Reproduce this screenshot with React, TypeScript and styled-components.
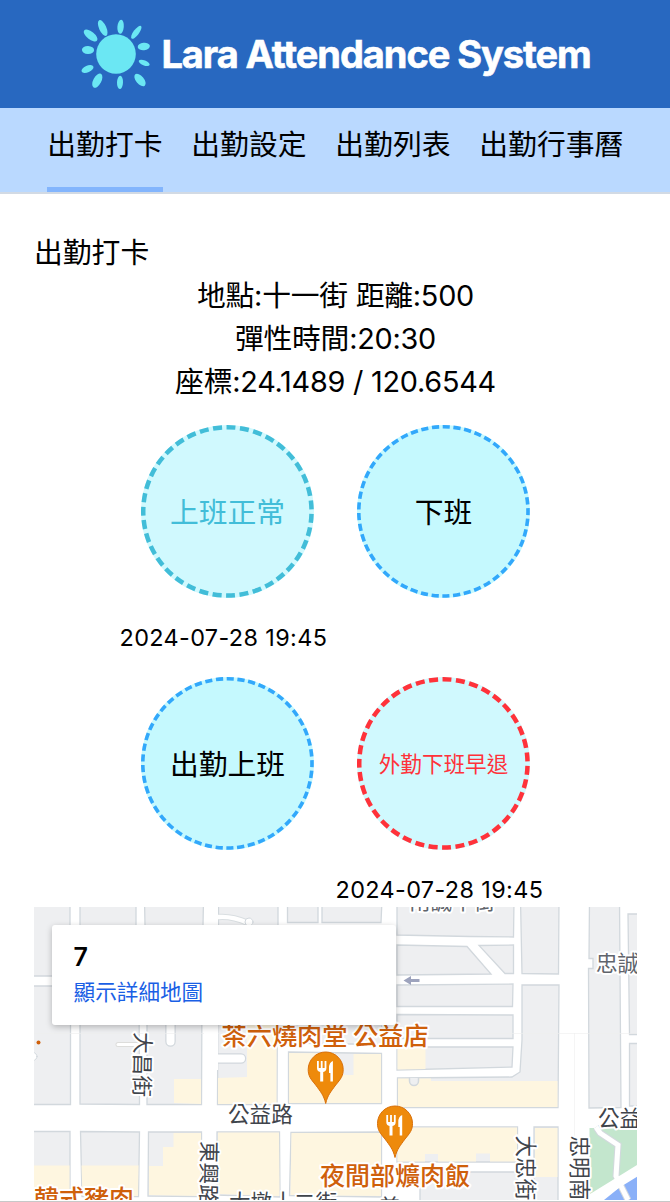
import React from "react";
import styled, { createGlobalStyle } from "styled-components";

const Global = createGlobalStyle`
  *{box-sizing:border-box}
  body{margin:0;background:#fff;color:#000;font-family:Inter,"Noto Sans CJK TC",sans-serif;font-size:28.8px;line-height:43.2px}
  #root{height:1202px;overflow:hidden}
`;

const Page = styled.div`
  display: flex;
  flex-direction: column;
  height: 1202px;
  overflow: hidden;
`;
const Header = styled.header`
  height: 108px;
  flex: none;
  display: flex;
  align-items: center;
  justify-content: center;
  gap: 9px;
  padding: 2px 0 0 1px;
  background: #2868c0;
`;
const Logo = styled.svg`
  width: 72px;
  height: 72px;
  flex: none;
  margin-bottom: 2px;
`;
const Brand = styled.h1`
  margin: 0;
  color: #fff;
  font-size: 38px;
  font-weight: 700;
  letter-spacing: -1.08px;
  -webkit-text-stroke: 0.6px #fff;
  white-space: nowrap;
`;
const Nav = styled.nav`
  flex: none;
  display: flex;
  justify-content: center;
  gap: 28.8px;
  height: 86.4px;
  padding: 15.4px 0 0 0.6px;
  background: #bad9ff;
  border-bottom: 2px solid #d2dae4;
`;
const Tab = styled.a<{ $active?: boolean }>`
  white-space: nowrap;
  height: 69px;
  border-bottom: 5px solid ${(p) => (p.$active ? "#83b5fd" : "transparent")};
`;
const Main = styled.main`
  flex: 1;
  padding: 37px 33px 0 34px;
  display: flex;
  flex-direction: column;
`;
const Title = styled.h2`
  margin: 0 0 -1px;
  font-size: 28.8px;
  font-weight: 400;
`;
const Info = styled.div`
  text-align: center;
  letter-spacing: -0.24px;
`;
const Punches = styled.section`
  display: grid;
  grid-template-columns: 216px 216px;
  grid-auto-rows: 252px;
  justify-content: center;
  margin-top: 1px;
  height: 503px;
  flex: none;
`;
const Cell = styled.div`
  padding-top: 20.8px;
  display: flex;
  flex-direction: column;
  align-items: center;
`;
const Punch = styled.button<{ $color: string; $fill: string; $size: number }>`
  position: relative;
  width: 172.8px;
  height: 172.8px;
  flex: none;
  padding: 0 0 2px;
  border: 0;
  border-radius: 50%;
  background: ${(p) => p.$fill};
  color: ${(p) => p.$color};
  font-family: inherit;
  font-size: ${(p) => p.$size}px;
`;
const Ring = styled.svg`
  position: absolute;
  inset: 0;
  width: 100%;
  height: 100%;
`;
const Stamp = styled.time`
  align-self: flex-start;
  margin-top: 18px;
  font-size: 23.4px;
  letter-spacing: 0.38px;
  white-space: nowrap;
`;
const MapFrame = styled.section`
  position: relative;
  height: 293px;
  flex: none;
  overflow: hidden;
`;
const MapArt = styled.svg`
  display: block;
  width: 603px;
  height: 293px;
`;
const MapCard = styled.div`
  position: absolute;
  left: 18px;
  top: 18px;
  width: 344px;
  height: 100px;
  padding: 15px 21.6px;
  border-radius: 3px;
  background: #fff;
  box-shadow: 0 2px 6px rgba(0, 0, 0, 0.25);
  font-size: 21.6px;
  line-height: 35px;
`;
const PlaceName = styled.div`
  font-size: 25px;
  font-weight: 600;
`;
const MapLink = styled.a`
  color: #1a5fe5;
`;
const Rule = styled.div`
  height: 1px;
  flex: none;
  margin: 1px -33px 0 -34px;
  background: #c8c8c8;
`;

type PunchProps = { label: string; color?: string; stroke: string; fill?: string; size?: number; w: number; n: number; time?: string };

function PunchCell({ label, color = "#000", stroke, fill = "#c5f9fe", size = 28.8, w, n, time }: PunchProps) {
  const r = 86.4 - w / 2;
  return (
    <Cell>
      <Punch $color={color} $fill={fill} $size={size}>
        <Ring viewBox="0 0 172.8 172.8">
          <circle
            cx="86.4" cy="86.4" r={r} fill="none" stroke={stroke} strokeWidth={w}
            pathLength={n * 3} strokeDasharray="2 1" strokeDashoffset="0.2" transform="rotate(-90 86.4 86.4)"
          />
        </Ring>
        {label}
      </Punch>
      {time && <Stamp>{time}</Stamp>}
    </Cell>
  );
}

const rays: [number, number, number, number, number][] = [
  [42.7, 28, 3.6, 8.6, -24], [60.6, 26.8, 3.2, 7, 5], [76.3, 32.3, 2.8, 7.8, 37],
  [83.8, 46.5, 3.7, 6.1, 84], [84.2, 62.9, 2.5, 5.8, 112], [80, 80, 4, 7.4, -40],
  [60, 82.4, 3, 6.6, 2], [37.3, 80.7, 4, 7.8, 28], [27.5, 69, 3.4, 6.4, 66],
  [28, 50, 4.1, 6.1, 92], [30.6, 35.5, 3.9, 8.2, -52],
];

const blocks = [
  "30,900 70,900 70,976 30,976", "30,986 70.5,986 70.5,1104.5 30,1104.5", "30,1131.5 70,1131.5 70,1210 30,1210",
  "80,900 136,900 136,976 80,976", "80,986 139,986 139.5,1104.5 80,1104", "80.5,1131.5 139.5,1132 138.5,1196.5 82,1196.5",
  "144.5,900 203.5,900 202,976 146,976", "147,986 202,986 201.5,1104.5 147,1104.5", "148.5,1132 201.5,1132 201.5,1196.5 148,1196",
  "218.5,900 278,900 278,976 218.5,976", "218,986 277.5,986 277,1104.5 217.5,1104.5", "217,1132 279.5,1132 280,1197 217,1195",
  "287.5,900 318,900 318,922.5 287.5,922.5", "322,900 382,900 381,922.5 322,922.5", "287.5,1000 382,1000 381.5,1044.5 287.5,1043",
  "288.5,1052 381.5,1053.5 381.5,1103.5 288.5,1103.5", "291,1132.5 381.5,1132 381.5,1197 289.5,1195.5",
  "397,900 514,900 513.5,937 470,936.5 397,935", "397,945 467,946.5 491,974 397,975", "479,945.5 513.5,945 513.5,973.5 505,973.5",
  "397,985 513,984 512.5,1006.5 397,1006.5", "397,1014.5 513,1015 513,1038.5 397,1038.5", "397,1047 513,1047 512,1067 397,1070",
  "520.5,900 559,900 558.5,974 522,973.5", "522,985 559,985 558,1107.5 397.5,1107.5 397.5,1078 512,1077 520,1072 522,1040",
  "397,1127 517.5,1127 517.5,1162 397,1162", "534,1127 558,1127 558,1210 534,1210", "420,1172 517.5,1172 517.5,1210 420,1210",
  "589.5,900 619.5,900 621,1107.5 589,1108 588.5,968.5 593,968.5 593,958.5 589,958.5", "628,914 645,914 645,1034.5 629.5,1034.5", "629.5,1043.5 645,1043.5 645,1106 629.5,1106",
];
const shops = [
  "30,1165.5 69.5,1165.5 69.5,1210 30,1210", "81.5,1165.5 138.5,1165.5 138,1196 82.5,1196", "174,1079 201,1079 201,1104 174,1103",
  "173.5,1133 201,1133 201,1196 149,1195 149,1166 163,1166 163,1147 173.5,1147", "218,1078 247,1077 247,1010 276.5,1010 276.5,1104 218,1104",
  "218,1132.5 279,1132.5 279.5,1196 218,1194", "289,1053 335,1053.5 335,1075 353.5,1075 353.5,1054 381,1054 381,1103 289,1103",
  "291.5,1133 381,1133 381,1196 290.5,1195", "397.5,1047.5 425.5,1047.5 425.5,1069 397.5,1069.5",
  "398,1078.5 431,1078.5 431,1081 557.5,1081 557.5,1107 398,1107", "397.5,1127.5 517,1127.5 517,1161.5 490,1161.5 490,1153.5 476,1153.5 476,1161.5 438,1161.5 438,1154 425,1154 425,1161.5 397.5,1161.5",
  "535,1128 557.5,1128 557.5,1177 535,1177",
];

function Pin({ x, y }: { x: number; y: number }) {
  return (
    <g transform={`translate(${x} ${y})`}>
      <path d="M0 51.5C-2 43-5 40-10 33-15 27-17.5 24-17.5 17.5A17.5 17.5 0 0 1 17.5 17.5C17.5 24 15 27 10 33 5 40 2 43 0 51.5Z" fill="#ee8a0b" stroke="#d9700a" strokeWidth="1" />
      <path d="M-8.7 9V16Q-8.7 19.5-5.5 20V29.5H-2.5V20Q.7 19.5.7 16V9H-1.1V16H-3.1V9H-4.9V16H-6.9V9ZM7.2 9Q3.3 10.5 3.3 16V21H4.7V29.5H7.2Z" fill="#fff" />
    </g>
  );
}

const Label = styled.text<{ $color?: string }>`
  fill: ${(p) => p.$color ?? "#40444b"};
  stroke: #fff;
  stroke-width: 4px;
  stroke-linejoin: round;
  paint-order: stroke;
  font-family: "Noto Sans CJK TC", sans-serif;
  font-weight: 400;
  line-height: 1;
`;
const PlaceLabel = styled(Label)`
  fill: #cf600b;
  font-weight: 500;
`;

function StreetMap() {
  return (
    <MapArt viewBox="34 907 603 293">
      <rect x="34" y="907" width="603" height="293" fill="#fff" />
      <g fill="#eeeff1" stroke="#d2d8dd" strokeWidth="1.3">{blocks.map((p) => <polygon key={p} points={p} />)}</g>
      <g fill="#fef6e0">{shops.map((p) => <polygon key={p} points={p} />)}</g>
      <g fill="none" strokeLinecap="round">
        <path d="M170.5 1015V1041.5M210 1058.5H241" stroke="#d2d8dd" strokeWidth="10.5" />
        <path d="M170.5 1015V1041.5M210 1058.5H241" stroke="#fff" strokeWidth="8" />
        <path d="M118 1044.5H137M30 1056.5H33" stroke="#dddddb" strokeWidth="5" />
        <path d="M118 1044.5H137" stroke="#fff" strokeWidth="3" />
        <circle cx="33" cy="1056.5" r="4" fill="#fff" stroke="#d2d8dd" />
        <path d="M219 917Q232 916 248 923" stroke="#d9dee1" strokeWidth="6.5" />
        <path d="M219 917Q232 916 248 923" stroke="#fff" strokeWidth="4.5" />
        <circle cx="249" cy="922" r="4" fill="#fff" stroke="#d2d8dd" />
        <path d="M409.5 1078V1081A4.5 4.5 0 0 0 418.5 1081V1078" fill="#eeeff1" stroke="#d2d8dd" strokeWidth="1.5" />
        <path d="M34 1033.5H637M574.5 1033.5V1200" stroke="#efefef" strokeWidth=".6" />
      </g>
      <rect x="204" y="907" width="14" height="163" fill="#fff" />
      <path d="M589.5 1128H640V1165L589.5 1196Z" fill="#c3e6cd" />
      <path d="M604 1200L640 1171V1205H600Z" fill="#8ab0f8" />
      <path d="M596 1127L600 1133 618 1145 616 1176 628 1200M585 1203L640 1169" fill="none" stroke="#d2d8dd" strokeWidth="7" />
      <path d="M596 1127L600 1133 618 1145 616 1176 628 1200" fill="none" stroke="#fff" strokeWidth="5" />
      <path d="M585 1203L640 1169" fill="none" stroke="#fff" strokeWidth="10" />
      <path d="M403.5 980.5L411 976V979H419.5V982H411V985Z" fill="#9da3bd" />
      <Label x="409" y="908.5" fontSize="21.6" $color="#60646c">南誠平街</Label>
      <Label x="596" y="970.5" fontSize="21.6" $color="#60646c">忠誠街</Label>
      <Label x="228" y="1122" fontSize="21.6">公益路</Label>
      <Label x="598" y="1126" fontSize="21.6">公益路</Label>
      <Label x="229" y="1210" fontSize="21.6">大墩十二街</Label>
      <Label x="379" y="1215" fontSize="21.6">美</Label>
      <Label transform="translate(135 1032) rotate(91)" fontSize="21.6">大昌街</Label>
      <Label transform="translate(201.5 1141) rotate(91)" fontSize="21.6">東興路</Label>
      <Label transform="translate(518 1135.5) rotate(90)" fontSize="21.6">大忠街</Label>
      <Label transform="translate(572 1135.5) rotate(90)" fontSize="21.6">忠明南路</Label>
      <Pin x={325.7} y={1052} />
      <Pin x={395} y={1106} />
      <PlaceLabel x="221.5" y="1044.5" fontSize="25.2">茶六燒肉堂 公益店</PlaceLabel>
      <PlaceLabel x="320" y="1184.5" fontSize="25">夜間部爌肉飯</PlaceLabel>
      <PlaceLabel x="34" y="1207.5" fontSize="25">韓式豬肉</PlaceLabel>
      <circle cx="38.5" cy="1042.5" r="2" fill="#cf600b" />
    </MapArt>
  );
}

export default function App() {
  return (
    <Page>
      <Global />
      <Header>
        <Logo viewBox="20 18 72 72">
          <circle cx="56" cy="54" r="19.8" fill="#6be7f3" />
          {rays.map(([x, y, rx, ry, a]) => (
            <ellipse key={x} cx={x} cy={y} rx={rx} ry={ry} transform={`rotate(${a} ${x} ${y})`} fill="#6be7f3" />
          ))}
        </Logo>
        <Brand>Lara Attendance System</Brand>
      </Header>
      <Nav>
        <Tab $active>出勤打卡</Tab>
        <Tab>出勤設定</Tab>
        <Tab>出勤列表</Tab>
        <Tab>出勤行事曆</Tab>
      </Nav>
      <Main>
        <Title>出勤打卡</Title>
        <Info>地點:十一街 距離:500</Info>
        <Info>彈性時間:20:30</Info>
        <Info>座標:24.1489 / 120.6544</Info>
        <Punches>
          <PunchCell label="上班正常" color="#42bdd8" stroke="#42bdd8" fill="#d0f9fe" w={4.5} n={39} time="2024-07-28 19:45" />
          <PunchCell label="下班" stroke="#32a8fb" w={3.6} n={49} />
          <PunchCell label="出勤上班" stroke="#32a8fb" w={3.6} n={49} />
          <PunchCell label="外勤下班早退" color="#ff323a" stroke="#ff323a" fill="#d0f9fe" size={21.6} w={4.5} n={39} time="2024-07-28 19:45" />
        </Punches>
        <MapFrame>
          <StreetMap />
          <MapCard>
            <PlaceName>7</PlaceName>
            <MapLink>顯示詳細地圖</MapLink>
          </MapCard>
        </MapFrame>
        <Rule />
      </Main>
    </Page>
  );
}
